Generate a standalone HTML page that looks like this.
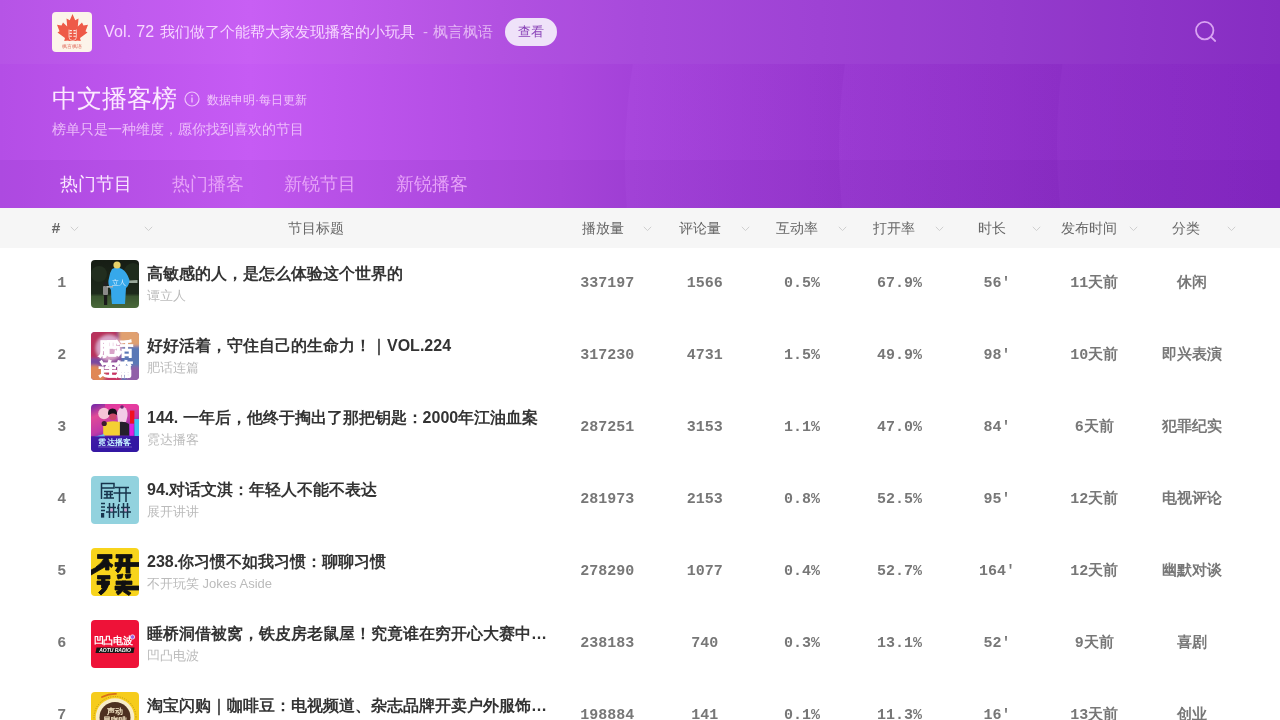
<!DOCTYPE html>
<html><head><meta charset="utf-8">
<style>
*{margin:0;padding:0;box-sizing:border-box}
html,body{width:1280px;height:720px;overflow:hidden;background:#fff}
body{font-family:"Liberation Sans",sans-serif;position:relative}
.hero{position:absolute;left:0;top:0;width:1280px;height:208px;overflow:hidden;background:linear-gradient(90deg,#b44ee6 0px,#c65af4 250px,#b04be0 500px,#a444da 640px,#9234cc 1000px,#8226c0 1280px)}
.glow{position:absolute;left:-100px;top:-150px;width:700px;height:400px;border-radius:50%;background:radial-gradient(closest-side,rgba(215,110,255,0.25),rgba(215,110,255,0) 100%)}
.topbar{position:absolute;left:0;top:0;width:1280px;height:64px;background:rgba(255,255,255,0.035)}
.tabbar{position:absolute;left:0;top:160px;width:1280px;height:48px;background:rgba(60,0,110,0.05)}
.abs{position:absolute;white-space:nowrap}
.logo{left:52px;top:12px;width:40px;height:40px;border-radius:4px;background:#fcf4ea;overflow:hidden}
.vol{left:104px;top:22px;font-size:16px;line-height:20px;color:#f7d6ff}
.vol.sub{color:#e4b6f4}
.btn{left:505px;top:18px;width:52px;height:28px;border-radius:14px;background:#efe2f9;color:#8a44b8;font-size:13px;line-height:28px;text-align:center}
.title{left:52px;top:83px;font-size:25px;line-height:30px;color:#fce9ff}
.info{left:184px;top:91px;width:16px;height:16px}
.decl{left:207px;top:92px;font-size:12px;line-height:16px;color:rgba(255,230,255,0.75)}
.slog{left:52px;top:121px;font-size:14px;line-height:16px;color:rgba(255,230,255,0.7)}
.tab{top:173px;font-size:18px;line-height:22px;color:#e7a3f8}
.tab.on{color:#fbe8ff}
.thead{position:absolute;left:0;top:208px;width:1280px;height:40px;background:#f6f6f6}
.th{top:220px;font-size:14px;line-height:16px;color:#666}
.chev{position:absolute;width:9px;height:6px;top:226px}
.row{position:absolute;left:0;width:1280px;height:72px}
.rank{position:absolute;left:40.7px;width:42px;text-align:center;top:26px;font-family:"Liberation Mono",monospace;font-weight:bold;font-size:15px;line-height:20px;color:#777}
.thumb{position:absolute;left:91px;top:12px;width:48px;height:48px;border-radius:4px;overflow:hidden}
.ttl{position:absolute;left:147px;top:15.5px;font-size:16px;line-height:20px;font-weight:bold;color:#333;white-space:nowrap}
.au{position:absolute;left:147px;top:40px;font-size:13px;line-height:16px;color:#bbb;white-space:nowrap}
.num{position:absolute;top:26px;width:97.4px;text-align:center;font-family:"Liberation Mono",monospace;font-weight:bold;font-size:15px;line-height:20px;color:#777;white-space:nowrap}
.wrap{position:absolute;left:0;top:0;width:1280px;height:720px;overflow:hidden;will-change:transform}
</style></head><body><div class="wrap">
<div class="hero">
  
  <div style="position:absolute;left:0;top:64px;width:1280px;height:144px;overflow:hidden;background:linear-gradient(90deg,#b44ee6 0px,#c65bf4 250px,#ac48de 560px,#a442d9 632px,#9636ce 845px,#8c2ec6 1062px,#8428c2 1280px)"><div style="position:absolute;left:625px;top:-503px;width:1200px;height:1200px;border-radius:50%;background:linear-gradient(90deg,rgba(200,110,255,0.09) 0px,rgba(200,110,255,0) 230px)"></div><div style="position:absolute;left:839px;top:-515px;width:1200px;height:1200px;border-radius:50%;background:linear-gradient(90deg,rgba(200,110,255,0.08) 0px,rgba(200,110,255,0) 230px)"></div><div style="position:absolute;left:1057px;top:-519px;width:1200px;height:1200px;border-radius:50%;background:linear-gradient(90deg,rgba(200,110,255,0.06) 0px,rgba(200,110,255,0) 220px)"></div></div>
  <div class="topbar"></div><div class="tabbar"></div>
  <div class="abs logo"><svg width="40" height="40" viewBox="0 0 40 40"><path d="M20.5 2L23.2 8.2L26.5 6.5L25.8 14.5L30 10.5L31.5 13.5L36 12.8L33.5 19.2L35.5 20.6L28 26L28.8 29L24.5 28.6L24.5 29L16.5 29L16.5 28.6L12.2 29L13 26L5.5 20.6L7.5 19.2L5 12.8L9.5 13.5L11 10.5L15.2 14.5L14.5 6.5L17.8 8.2Z" fill="#ee5a48"/><path d="M17.6 18.6h2.3M21.4 18.6h2.3M17.4 21.4h2.5M21.4 21.4h2.5M17.4 24.2h2.5M21.4 24.2h2.5" stroke="#fcefe6" stroke-width="1.1"/><path d="M17 17.5v7.5q0 3.5 3.7 3.5q3.7 0 3.7-3.5v-7.5" fill="none" stroke="#fcefe6" stroke-width="0.7"/><text x="20.2" y="35.6" font-size="4.6" fill="#e06a5a" text-anchor="middle">枫言枫语</text></svg></div>
  <div class="abs vol" style="left:104px;font-size:16px;letter-spacing:0.2px">Vol. 72</div>
  <div class="abs vol" style="left:159.5px;font-size:15px">我们做了个能帮大家发现播客的小玩具</div>
  <div class="abs vol sub" style="left:423px;font-size:15px">-</div>
  <div class="abs vol sub" style="left:432.5px;font-size:15px">枫言枫语</div>
  <div class="abs btn">查看</div>
  <svg class="abs" style="left:1193px;top:19px" width="26" height="26" viewBox="0 0 26 26"><circle cx="11.7" cy="11.6" r="8.7" fill="none" stroke="#d9a3f2" stroke-width="1.8"/><path d="M18.2 18.2L22.2 22" stroke="#d9a3f2" stroke-width="1.8" stroke-linecap="round"/></svg>
  <div class="abs title">中文播客榜</div>
  <svg class="abs info" viewBox="0 0 16 16"><circle cx="8" cy="8" r="7" fill="none" stroke="rgba(255,230,255,0.75)" stroke-width="1.2"/><rect x="7.3" y="6.5" width="1.4" height="5" fill="rgba(255,230,255,0.75)"/><circle cx="8" cy="4.6" r="0.8" fill="rgba(255,230,255,0.75)"/></svg>
  <div class="abs decl">数据申明·每日更新</div>
  <div class="abs slog">榜单只是一种维度，愿你找到喜欢的节目</div>
  <div class="abs tab on" style="left:60px">热门节目</div>
  <div class="abs tab" style="left:172px">热门播客</div>
  <div class="abs tab" style="left:284px">新锐节目</div>
  <div class="abs tab" style="left:396px">新锐播客</div>
</div>
<div class="thead"></div>
<div class="abs th" style="left:51.5px;top:221.5px;font-weight:bold;font-family:'Liberation Mono',monospace;font-size:15px;color:#666">#</div>
<div class="abs th" style="left:288px">节目标题</div>
<div class="abs th" style="left:582px">播放量</div>
<div class="abs th" style="left:679px">评论量</div>
<div class="abs th" style="left:776px">互动率</div>
<div class="abs th" style="left:873px">打开率</div>
<div class="abs th" style="left:978px">时长</div>
<div class="abs th" style="left:1061px">发布时间</div>
<div class="abs th" style="left:1172px">分类</div>
<svg class="chev" style="left:70px" viewBox="0 0 9 6"><path d="M0.8 0.8L4.5 4.6L8.2 0.8" fill="none" stroke="#cfcfcf" stroke-width="1"/></svg><svg class="chev" style="left:144px" viewBox="0 0 9 6"><path d="M0.8 0.8L4.5 4.6L8.2 0.8" fill="none" stroke="#cfcfcf" stroke-width="1"/></svg><svg class="chev" style="left:643px" viewBox="0 0 9 6"><path d="M0.8 0.8L4.5 4.6L8.2 0.8" fill="none" stroke="#cfcfcf" stroke-width="1"/></svg><svg class="chev" style="left:741px" viewBox="0 0 9 6"><path d="M0.8 0.8L4.5 4.6L8.2 0.8" fill="none" stroke="#cfcfcf" stroke-width="1"/></svg><svg class="chev" style="left:838px" viewBox="0 0 9 6"><path d="M0.8 0.8L4.5 4.6L8.2 0.8" fill="none" stroke="#cfcfcf" stroke-width="1"/></svg><svg class="chev" style="left:935px" viewBox="0 0 9 6"><path d="M0.8 0.8L4.5 4.6L8.2 0.8" fill="none" stroke="#cfcfcf" stroke-width="1"/></svg><svg class="chev" style="left:1032px" viewBox="0 0 9 6"><path d="M0.8 0.8L4.5 4.6L8.2 0.8" fill="none" stroke="#cfcfcf" stroke-width="1"/></svg><svg class="chev" style="left:1129px" viewBox="0 0 9 6"><path d="M0.8 0.8L4.5 4.6L8.2 0.8" fill="none" stroke="#cfcfcf" stroke-width="1"/></svg><svg class="chev" style="left:1227px" viewBox="0 0 9 6"><path d="M0.8 0.8L4.5 4.6L8.2 0.8" fill="none" stroke="#cfcfcf" stroke-width="1"/></svg>
<div class="row" style="top:248px"><div class="rank">1</div><div class="thumb"><svg width="48" height="48" viewBox="0 0 48 48"><defs><linearGradient id="g1" x1="0" y1="0" x2="0" y2="1"><stop offset="0" stop-color="#161d14"/><stop offset="0.7" stop-color="#1e2a1c"/><stop offset="0.76" stop-color="#3a5430"/><stop offset="1" stop-color="#4a6a3a"/></linearGradient></defs><rect width="48" height="48" fill="url(#g1)"/><circle cx="8" cy="14" r="8" fill="#222e1f"/><circle cx="42" cy="12" r="9" fill="#1f2c1c"/><path d="M38 20.5L46.5 20L46.5 23L38 23Z" fill="#9aa89a"/><path d="M21 9Q26 6 31 9Q36 12 38.5 20Q38 26 35 28L34 44L21 44Q20 36 20 30Q16 24 18 18Q19 12 21 9Z" fill="#36a8ea"/><circle cx="26" cy="5" r="3.6" fill="#e6d36a"/><rect x="12" y="26" width="5" height="9" rx="1" fill="#8a8a88"/><rect x="13" y="35" width="3.2" height="10" fill="#1a1a1a"/><circle cx="14.5" cy="24" r="2.2" fill="#202020"/><rect x="16" y="26" width="6" height="1.6" fill="#b0b0b0"/><text x="28" y="25" font-size="7" fill="#dcefff" text-anchor="middle" font-family="Liberation Serif">立人</text></svg></div><div class="ttl">高敏感的人，是怎么体验这个世界的</div><div class="au">谭立人</div><div class="num" style="left:558.6px">337197</div><div class="num" style="left:656.0px">1566</div><div class="num" style="left:753.4px">0.5%</div><div class="num" style="left:850.8px">67.9%</div><div class="num" style="left:948.2px">56'</div><div class="num" style="left:1045.6px">11天前</div><div class="num" style="left:1143.0px">休闲</div></div>
<div class="row" style="top:320px"><div class="rank">2</div><div class="thumb"><svg width="48" height="48" viewBox="0 0 48 48"><defs><filter id="b2" x="-20%" y="-20%" width="140%" height="140%"><feGaussianBlur stdDeviation="1.5"/></filter></defs><rect width="48" height="48" fill="#8a4a98"/><g filter="url(#b2)"><rect x="-4" y="-4" width="30" height="30" fill="#b8305c"/><rect x="28" y="-4" width="24" height="20" fill="#e0a070"/><rect x="30" y="14" width="22" height="40" fill="#5a78b6"/><circle cx="18" cy="16" r="13" fill="#d8a4c8"/><rect x="-4" y="26" width="16" height="10" fill="#7848a0"/><circle cx="3" cy="44" r="11" fill="#e08856"/><rect x="14" y="38" width="16" height="14" fill="#c83462"/><circle cx="44" cy="44" r="10" fill="#9060a8"/></g><g fill="#fff" stroke="#fff" stroke-width="0.9" font-weight="bold" text-anchor="middle" letter-spacing="-1.5"><text x="24" y="23" font-size="18">肥话</text><text x="24" y="42.5" font-size="18">连篇</text></g></svg></div><div class="ttl">好好活着，守住自己的生命力！｜VOL.224</div><div class="au">肥话连篇</div><div class="num" style="left:558.6px">317230</div><div class="num" style="left:656.0px">4731</div><div class="num" style="left:753.4px">1.5%</div><div class="num" style="left:850.8px">49.9%</div><div class="num" style="left:948.2px">98'</div><div class="num" style="left:1045.6px">10天前</div><div class="num" style="left:1143.0px">即兴表演</div></div>
<div class="row" style="top:392px"><div class="rank">3</div><div class="thumb"><svg width="48" height="48" viewBox="0 0 48 48"><defs><linearGradient id="g3" x1="0" y1="0" x2="0.4" y2="1"><stop offset="0" stop-color="#6a24a8"/><stop offset="0.25" stop-color="#e04a98"/><stop offset="0.55" stop-color="#c03aa8"/><stop offset="0.75" stop-color="#6a28b0"/><stop offset="1" stop-color="#2c1898"/></linearGradient></defs><rect width="48" height="48" fill="url(#g3)"/><path d="M14 0L48 0L48 6Q30 2 14 8Z" fill="#e83aa0" opacity="0.8"/><circle cx="13" cy="9.5" r="5.8" fill="#f6c4d6"/><rect x="39" y="6.6" width="4.4" height="13" fill="#f01020"/><rect x="38.6" y="19.8" width="4.2" height="12" fill="#e020e0"/><rect x="43.4" y="15" width="4.6" height="17" fill="#40c0f0"/><path d="M26 9Q28 2 33 3Q37 5 36.5 12L35 18L27 18Z" fill="#f2cce6"/><circle cx="31" cy="3" r="1.8" fill="#6a2a70"/><path d="M27.5 18Q34 17 38 20L38 31.6L27.5 31.6Z" fill="#24202c"/><path d="M17 10.8Q16.5 4.5 21.5 4.5Q26.5 4.5 26 10.8Z" fill="#16101a"/><rect x="18.4" y="9.4" width="7" height="6.5" rx="3" fill="#c84868"/><path d="M12.2 19Q20 16 28.9 18L28.9 31.6L12.2 31.6Z" fill="#f4d034"/><circle cx="13.2" cy="19.5" r="2.6" fill="#3e1e30"/><path d="M3 33L13 30L14 33Z" fill="#60c8f0" opacity="0.9"/><rect x="0" y="32.3" width="48" height="15.7" fill="#3418a4" opacity="0.85"/><text x="24" y="40.8" font-size="8.2" font-weight="bold" fill="#c4f0ff" text-anchor="middle" letter-spacing="0.3">霓达播客</text><rect x="7" y="42.6" width="34" height="0.8" fill="#7a68c8"/></svg></div><div class="ttl">144. 一年后，他终于掏出了那把钥匙：2000年江油血案</div><div class="au">霓达播客</div><div class="num" style="left:558.6px">287251</div><div class="num" style="left:656.0px">3153</div><div class="num" style="left:753.4px">1.1%</div><div class="num" style="left:850.8px">47.0%</div><div class="num" style="left:948.2px">84'</div><div class="num" style="left:1045.6px">6天前</div><div class="num" style="left:1143.0px">犯罪纪实</div></div>
<div class="row" style="top:464px"><div class="rank">4</div><div class="thumb"><svg width="48" height="48" viewBox="0 0 48 48"><rect width="48" height="48" fill="#92d2de"/><g stroke="#17344c" stroke-width="1.5" fill="none"><path d="M10.5 23V7.5H23V12H10.5"/><path d="M13 15.5H22M13 18.5H22M12.5 22H23M16 15V22M19.5 15V22"/><path d="M24 11.5H38M22.5 17H40M28.5 11.5V26M35 11.5V26"/><path d="M10 27.5H14M10 31H14M10 34.5H14"/><path d="M16 31.5H25M15 36H26M18.5 27V42M22.5 27V42"/><path d="M28 28L26.5 33M27.5 31V41M30 31.5H39M29 36H40M32.5 27V42M36.5 27V42"/></g><rect x="10" y="37" width="3.2" height="4.6" fill="#17344c"/><rect x="19.5" y="32.5" width="2.2" height="3" fill="#d89ed0"/><rect x="33.5" y="32.5" width="2.2" height="3" fill="#d89ed0"/></svg></div><div class="ttl">94.对话文淇：年轻人不能不表达</div><div class="au">展开讲讲</div><div class="num" style="left:558.6px">281973</div><div class="num" style="left:656.0px">2153</div><div class="num" style="left:753.4px">0.8%</div><div class="num" style="left:850.8px">52.5%</div><div class="num" style="left:948.2px">95'</div><div class="num" style="left:1045.6px">12天前</div><div class="num" style="left:1143.0px">电视评论</div></div>
<div class="row" style="top:536px"><div class="rank">5</div><div class="thumb"><svg width="48" height="48" viewBox="0 0 48 48"><rect width="48" height="48" fill="#f8d41c"/><g fill="#111" stroke="#111" stroke-width="0.8"><path d="M6.5 6.5H21V10.5H18Q15 17 7 22L5 19Q11 15 13 10.5H6.5Z"/><path d="M14.5 13L18 12.5V22H14.5Z"/><path d="M17.5 14L22 17L20.5 19.5L16.5 16.5Z"/><path d="M25 6.5H41V10H25Z"/><path d="M24 14.5H48V18.5H24Z"/><path d="M28 10H32Q32 20 27 25L24.5 22.5Q28 19 28 10Z"/><path d="M35 10H39V25H35Z"/><path d="M0 22L14 15L15.5 18L0 27Z"/><path d="M6.5 27.5H19V31H6.5ZM6 33H18.5V36.5H6Z"/><path d="M10.5 30H14V40H10.5Z"/><path d="M18 36Q16 43 10 47L7.5 44.5Q12 41 14 36Z"/><path d="M26 27L32 26L31 30L27 31Z M34 26.5L40 26L39 30L35 30.5Z"/><path d="M25 33H41V36.5H25Z"/><path d="M24 38H48V42H24Z"/><path d="M31 33H35Q34 43 27 47L25 44Q31 41 31 33Z"/><path d="M34 41L40 45L38 47.5L32 43.5Z"/></g></svg></div><div class="ttl">238.你习惯不如我习惯：聊聊习惯</div><div class="au">不开玩笑 Jokes Aside</div><div class="num" style="left:558.6px">278290</div><div class="num" style="left:656.0px">1077</div><div class="num" style="left:753.4px">0.4%</div><div class="num" style="left:850.8px">52.7%</div><div class="num" style="left:948.2px">164'</div><div class="num" style="left:1045.6px">12天前</div><div class="num" style="left:1143.0px">幽默对谈</div></div>
<div class="row" style="top:608px"><div class="rank">6</div><div class="thumb"><svg width="48" height="48" viewBox="0 0 48 48"><rect width="48" height="48" fill="#ee1238"/><text x="22" y="24" font-size="9.5" font-weight="bold" fill="#fff" text-anchor="middle" letter-spacing="-0.3">凹凸电波</text><circle cx="41.5" cy="17" r="2.2" fill="#9a60e0" stroke="#fff" stroke-width="0.7"/><path d="M5.5 27.5L43.5 27.5L42.5 33L4.5 33Z" fill="#161616"/><text x="24" y="32" font-size="5" font-weight="bold" font-style="italic" fill="#fff" text-anchor="middle" font-family="Liberation Sans">AOTU RADIO</text></svg></div><div class="ttl">睡桥洞借被窝，铁皮房老鼠屋！究竟谁在穷开心大赛中…</div><div class="au">凹凸电波</div><div class="num" style="left:558.6px">238183</div><div class="num" style="left:656.0px">740</div><div class="num" style="left:753.4px">0.3%</div><div class="num" style="left:850.8px">13.1%</div><div class="num" style="left:948.2px">52'</div><div class="num" style="left:1045.6px">9天前</div><div class="num" style="left:1143.0px">喜剧</div></div>
<div class="row" style="top:680px"><div class="rank">7</div><div class="thumb"><svg width="48" height="48" viewBox="0 0 48 48"><rect width="48" height="48" fill="#f6cc1c"/><circle cx="24" cy="25.5" r="21" fill="none" stroke="#a07818" stroke-width="0.8" stroke-dasharray="0.8 1.6"/><circle cx="24" cy="25.5" r="19.3" fill="#f8ecc8"/><path d="M11 5Q18 1.5 25 1.8" stroke="#d87018" stroke-width="1.8" fill="none" stroke-linecap="round"/><circle cx="24" cy="25.5" r="15.5" fill="#4e3020"/><text x="24" y="22" font-size="8" font-weight="bold" fill="#f4e4c4" text-anchor="middle">声动</text><text x="24" y="30.5" font-size="8" font-weight="bold" fill="#f4e4c4" text-anchor="middle">早咖啡</text></svg></div><div class="ttl">淘宝闪购｜咖啡豆：电视频道、杂志品牌开卖户外服饰…</div><div class="au">声动早咖啡</div><div class="num" style="left:558.6px">198884</div><div class="num" style="left:656.0px">141</div><div class="num" style="left:753.4px">0.1%</div><div class="num" style="left:850.8px">11.3%</div><div class="num" style="left:948.2px">16'</div><div class="num" style="left:1045.6px">13天前</div><div class="num" style="left:1143.0px">创业</div></div>

</div></body></html>
